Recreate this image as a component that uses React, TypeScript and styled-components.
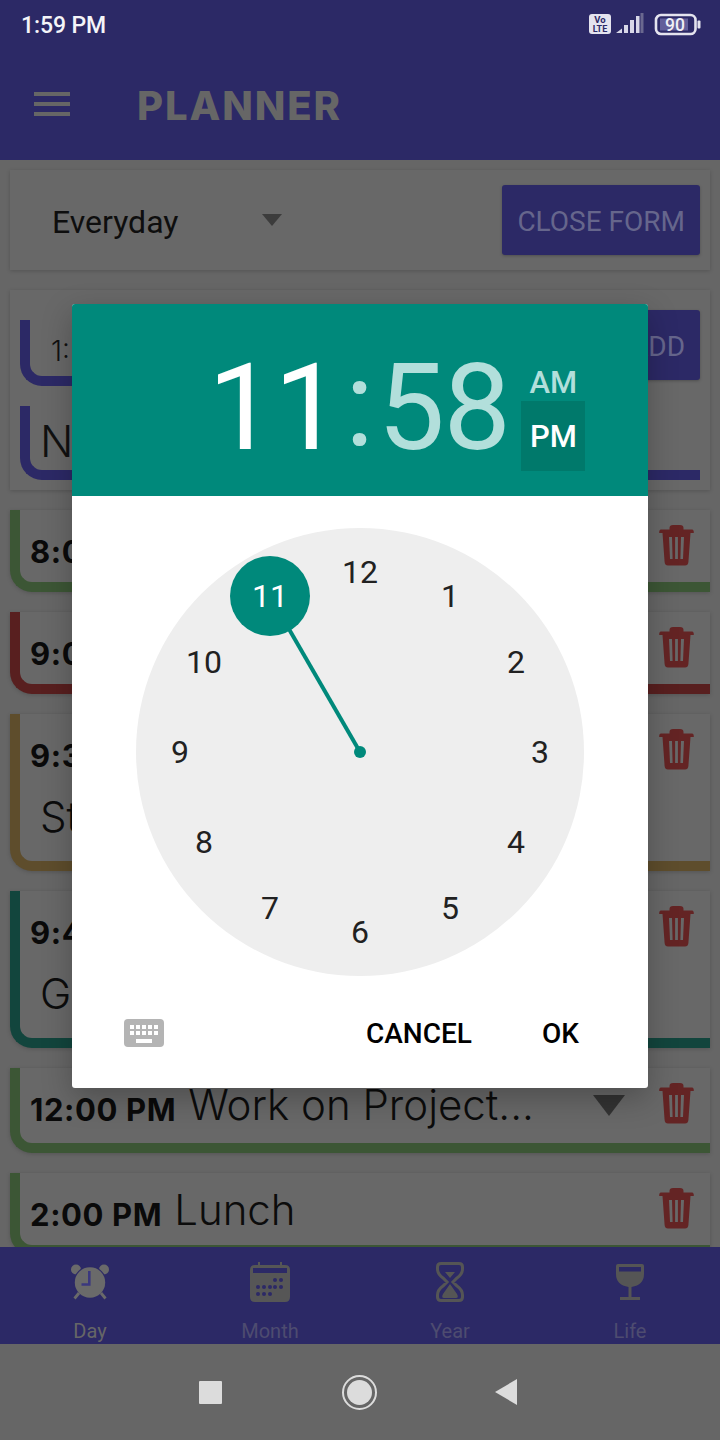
import React from "react";
import styled, { createGlobalStyle } from "styled-components";

const Global = createGlobalStyle`
  html, body { margin: 0; padding: 0; background: #666; }
  * { box-sizing: border-box; }
  body { font-family: Roboto, "Liberation Sans", sans-serif; }
`;

const Page = styled.div`
  position: relative;
  width: 720px;
  height: 1440px;
  display: flex;
  flex-direction: column;
  overflow: hidden;
  background: #666;
`;
const TopBlock = styled.header`
  height: 160px;
  flex: none;
  background: #2c2966;
  display: flex;
  flex-direction: column;
`;
const StatusBar = styled.div`
  height: 50px;
  padding: 0 19px 0 21px;
  display: flex;
  align-items: center;
  justify-content: space-between;
  color: #f4f4f8;
`;
const Clock = styled.span`
  font-size: 23px;
  font-weight: 500;
  line-height: 50px;
  padding-top: 2px;
  letter-spacing: -0.1px;
`;
const StatusIcons = styled.div`
  display: flex;
  align-items: center;
  margin-top: -2px;
`;
const AppBar = styled.div`
  flex: 1;
  display: flex;
  align-items: center;
  padding: 0 0 0 34px;
  margin-top: -2px;
`;
const Burger = styled.div`
  width: 36px;
  height: 24px;
  display: flex;
  flex-direction: column;
  justify-content: space-between;
  margin-right: 67px;
  span { display: block; height: 4px; background: #666; }
`;
const AppTitle = styled.h1`
  margin: 2px 0 0;
  font-family: Inter, sans-serif;
  font-size: 40px;
  font-weight: 800;
  letter-spacing: 1.9px;
  color: #666;
`;
const Content = styled.main`
  flex: 1;
  min-height: 0;
  overflow: hidden;
  padding: 10px 10px 0;
  display: flex;
  flex-direction: column;
  gap: 20px;
`;
const Card = styled.section`
  flex: none;
  background: #686868;
  box-shadow: 0 1px 4px rgba(0, 0, 0, 0.18);
`;
const FilterCard = styled(Card)`
  height: 100px;
  display: flex;
  align-items: center;
  justify-content: space-between;
  padding: 0 10px 0 42px;
`;
const Select = styled.div`
  display: flex;
  align-items: center;
  gap: 84px;
`;
const SelectText = styled.span`
  font-size: 32px;
  line-height: 44px;
  padding-top: 4px;
  color: #0e0e0e;
`;
const Caret = styled.span<{ $w: number; $h: number; $c: string }>`
  display: block;
  width: 0;
  height: 0;
  border-left: ${(p) => p.$w / 2}px solid transparent;
  border-right: ${(p) => p.$w / 2}px solid transparent;
  border-top: ${(p) => p.$h}px solid ${(p) => p.$c};
  flex: none;
`;
const Button = styled.button`
  height: 70px;
  border: 0;
  border-radius: 3px;
  background: #2c2966;
  color: #66668c;
  font-family: Roboto, sans-serif;
  font-size: 28px;
  padding: 2px 15px 0;
  box-shadow: 0 1px 3px rgba(0, 0, 0, 0.25);
`;
const FormCard = styled(Card)`
  height: 200px;
  padding: 20px 10px 10px;
  display: flex;
  flex-direction: column;
  gap: 20px;
`;
const FormTop = styled.div`
  display: flex;
  gap: 10px;
  height: 76px;
`;
const Input = styled.div<{ $c: string; $size: number; $pad: number }>`
  flex: 1;
  margin-top: 10px;
  border-left: 10px solid ${(p) => p.$c};
  border-bottom: 10px solid ${(p) => p.$c};
  border-bottom-left-radius: 22px;
  padding: 6px 0 0 ${(p) => p.$pad}px;
  display: flex;
  align-items: center;
  font-family: Inter, sans-serif;
  font-weight: 300;
  font-size: ${(p) => p.$size}px;
  color: #111;
`;
const NameInput = styled(Input)`
  margin-top: 0;
  height: 74px;
  flex: none;
`;
const Row = styled.article<{ $c: string; $h: number }>`
  flex: none;
  height: ${(p) => p.$h}px;
  background: #686868;
  border-left: 10px solid ${(p) => p.$c};
  border-bottom: 10px solid ${(p) => p.$c};
  border-bottom-left-radius: 22px;
  box-shadow: 0 1px 4px rgba(0, 0, 0, 0.18);
  display: flex;
  align-items: flex-start;
  padding: 0 16px 0 10px;
`;
const RowMain = styled.div<{ $stack?: boolean }>`
  flex: 1;
  min-width: 0;
  display: flex;
  flex-direction: ${(p) => (p.$stack ? "column" : "row")};
  align-items: flex-start;
  gap: ${(p) => (p.$stack ? "14px" : "12px")};
`;
const Time = styled.span`
  margin-top: 20px;
  font-family: Inter, sans-serif;
  font-weight: 700;
  font-size: 31px;
  line-height: 44px;
  color: #0a0a0a;
  letter-spacing: 0.6px;
  white-space: nowrap;
`;
const Title = styled.span<{ $stack?: boolean }>`
  margin: ${(p) => (p.$stack ? "0 0 0 10px" : "12px 0 0")};
  font-family: Inter, sans-serif;
  font-weight: 300;
  font-size: 42px;
  line-height: 50px;
  color: #0c0c0c;
  white-space: nowrap;
`;
const RowCaret = styled.div`
  margin: 27px 34px 0 0;
`;
const TrashWrap = styled.div`
  margin-top: 14px;
  flex: none;
  line-height: 0;
`;
const BottomNav = styled.nav`
  flex: none;
  height: 97px;
  background: #2c2966;
  display: grid;
  grid-template-columns: repeat(4, 1fr);
`;
const Tab = styled.div<{ $active?: boolean }>`
  display: flex;
  flex-direction: column;
  align-items: center;
  padding-top: 14px;
  color: ${(p) => (p.$active ? "#666" : "#4e4c70")};
  svg { display: block; }
`;
const TabIcon = styled.div`
  height: 42px;
  display: flex;
  align-items: center;
  justify-content: center;
`;
const TabLabel = styled.span`
  margin-top: 15px;
  font-size: 20px;
  line-height: 26px;
`;
const SystemNav = styled.div`
  flex: none;
  height: 96px;
  background: #666;
  display: flex;
  align-items: center;
  justify-content: center;
  padding-right: 2px;
`;
const SysSquare = styled.div`
  width: 23px;
  height: 23px;
  border-radius: 1px;
  background: #dcdcdc;
  margin-right: 120px;
`;
const SysCircle = styled.div`
  width: 35px;
  height: 35px;
  border-radius: 50%;
  border: 2.5px solid #dcdcdc;
  padding: 3px;
  margin-right: 118px;
  &::after { content: ""; display: block; width: 100%; height: 100%; border-radius: 50%; background: #dcdcdc; }
`;
const Dialog = styled.div`
  position: absolute;
  left: 72px;
  top: 304px;
  width: 576px;
  height: 784px;
  background: #fff;
  border-radius: 3px;
  overflow: hidden;
  display: flex;
  flex-direction: column;
  box-shadow: 0 10px 30px rgba(0, 0, 0, 0.25);
`;
const DialogHead = styled.div`
  height: 192px;
  flex: none;
  background: #00897b;
  display: flex;
  align-items: center;
  padding-left: 136px;
`;
const BigTime = styled.div`
  display: flex;
  align-items: center;
  margin-top: 16px;
  font-size: 120px;
  line-height: 160px;
  font-weight: 400;
  letter-spacing: -1.5px;
`;
const Hours = styled.span`
  color: #fff;
`;
const Minutes = styled.span`
  color: #b2dfdb;
`;
const Colon = styled.span`
  color: #b2dfdb;
  margin: -8px 5px 0 5px;
`;
const Meridiem = styled.div`
  display: flex;
  flex-direction: column;
  margin: 35px 0 0 12px;
`;
const MerBtn = styled.div<{ $on?: boolean }>`
  width: 64px;
  height: ${(p) => (p.$on ? 70 : 37)}px;
  display: flex;
  align-items: center;
  justify-content: center;
  font-size: 31px;
  font-weight: 500;
  color: ${(p) => (p.$on ? "#fff" : "#b2dfdb")};
  background: ${(p) => (p.$on ? "#00796b" : "transparent")};
`;
const DialBody = styled.div`
  flex: 1;
  padding: 32px 64px 0;
`;
const Dial = styled.div`
  position: relative;
  width: 448px;
  height: 448px;
  border-radius: 50%;
  background: #eee;
`;
const DialNum = styled.span<{ $on?: boolean }>`
  position: absolute;
  transform: translate(-50%, -50%);
  font-size: 32px;
  line-height: 40px;
  color: ${(p) => (p.$on ? "#fff" : "#212121")};
`;
const Selector = styled.div`
  position: absolute;
  left: 94px;
  top: 28px;
  width: 80px;
  height: 80px;
  border-radius: 50%;
  background: #00897b;
`;
const Hand = styled.div`
  position: absolute;
  left: 222px;
  top: 68px;
  width: 4px;
  height: 156px;
  background: #00897b;
  transform-origin: 50% 100%;
  transform: rotate(-30deg);
`;
const Pivot = styled.div`
  position: absolute;
  left: 218px;
  top: 218px;
  width: 12px;
  height: 12px;
  border-radius: 50%;
  background: #00897b;
`;
const Actions = styled.div`
  flex: none;
  height: 112px;
  display: flex;
  align-items: center;
  padding: 2px 0 0 52px;
  margin-top: auto;
  svg { flex: none; }
`;
const ActionBtn = styled.span<{ $left?: number }>`
  font-size: 28px;
  font-weight: 500;
  color: #000;
  margin-left: ${(p) => p.$left ?? 0}px;
`;

const Trash = () => (
  <svg width="35" height="42" viewBox="0 0 35 42">
    <path fill="#642424" fillRule="evenodd" d="M10.5 4 Q10.5 1 14 1 H21 Q24.5 1 24.5 4 V5.5 H33 Q35 5.5 34.8 9 H31.5 L29.4 38 Q29 41.5 26 41.5 H9 Q6 41.5 5.6 38 L3.5 9 H.2 Q0 5.5 2 5.5 H10.5 Z M10 13 L11 35 H13.6 L13 13 Z M16.1 13 V35 H18.9 V13 Z M22 13 L21.4 35 H24 L25 13 Z" />
  </svg>
);

const Volte = () => (
  <svg width="24" height="22" viewBox="0 0 24 22">
    <rect x="1" y="1" width="22" height="20" rx="3" fill="#e4e3ee" />
    <text x="12" y="9.5" textAnchor="middle" fontFamily="Roboto, sans-serif" fontWeight="700" fontSize="9.5" fill="#2c2966">Vo</text>
    <text x="12" y="18.5" textAnchor="middle" fontFamily="Roboto, sans-serif" fontWeight="700" fontSize="9" fill="#2c2966">LTE</text>
  </svg>
);
const Signal = () => (
  <svg width="28" height="22" viewBox="0 0 28 22" style={{ marginLeft: 4 }}>
    <path fill="#d8d7e8" d="M0 20 L6 15.5 V20 Z" />
    <rect x="8" y="12" width="4" height="8" fill="#d8d7e8" />
    <rect x="14" y="7" width="4" height="13" fill="#d8d7e8" />
    <rect x="20" y="3" width="3.5" height="17" fill="#d8d7e8" />
    <rect x="24.5" y="0" width="3" height="20" fill="#6a688f" />
  </svg>
);
const Battery = () => (
  <svg width="47" height="23" viewBox="0 0 47 23" style={{ marginLeft: 10 }}>
    <rect x="2" y="2" width="39.5" height="19" rx="5" fill="none" stroke="#e4e3ee" strokeWidth="2.6" />
    <rect x="6" y="5.5" width="28" height="12" fill="#625f9a" />
    <rect x="43.5" y="7.5" width="3" height="8" rx="1" fill="#e4e3ee" />
    <text x="21" y="18" textAnchor="middle" fontFamily="Roboto, sans-serif" fontSize="17.5" fontWeight="500" fill="#f0f0f5">90</text>
  </svg>
);
const Keyboard = () => (
  <svg width="40" height="28" viewBox="0 0 40 28">
    <rect width="40" height="28" rx="4" fill="#b4b4b4" />
    {[0, 1, 2, 3, 4].map((i) => (
      <React.Fragment key={i}>
        <rect x={6 + i * 6} y={6} width="4" height="4" fill="#fff" />
        <rect x={6 + i * 6} y={12} width="4" height="4" fill="#fff" />
      </React.Fragment>
    ))}
    <rect x="12" y="20" width="16" height="4" fill="#fff" />
  </svg>
);
const AlarmIcon = () => (
  <svg width="38" height="36" viewBox="0 0 38 36">
    <circle cx="5" cy="5.5" r="5" fill="#6a6a6a" />
    <circle cx="33" cy="5.5" r="5" fill="#6a6a6a" />
    <circle cx="19" cy="18.5" r="16.4" fill="#2c2966" />
    <circle cx="19" cy="18.5" r="15.2" fill="#6a6a6a" />
    <path d="M8 29 L3.5 34.5 M30 29 L34.5 34.5" stroke="#6a6a6a" strokeWidth="2.8" />
    <path d="M18.3 7 V20.5 H10.5" fill="none" stroke="#3b387f" strokeWidth="2.6" />
  </svg>
);
const CalendarIcon = () => (
  <svg width="40" height="40" viewBox="0 0 40 40">
    <path fill="#565656" d="M8 0 H10 V3 H30 V0 H32 V3 H35 Q40 3 40 8 V35 Q40 40 35 40 H5 Q0 40 0 35 V8 Q0 3 5 3 H8 Z" />
    <rect x="3" y="6" width="34" height="5" fill="#2c2966" />
    {[[25, 18], [31, 18], [8, 25], [14, 25], [20, 25], [25, 25], [31, 25], [8, 32], [14, 32], [20, 32]].map(([x, y]) => (
      <circle key={`${x}-${y}`} cx={x} cy={y} r="2" fill="#2c2966" />
    ))}
  </svg>
);
const HourglassIcon = () => (
  <svg width="28" height="40" viewBox="0 0 28 40">
    <path fill="none" stroke="#555" strokeWidth="3" d="M5 1.5 H23 Q26.5 1.5 26.5 5 V7 Q26.5 12 21 16 L17 20 L21 24 Q26.5 28 26.5 33 V35 Q26.5 38.5 23 38.5 H5 Q1.5 38.5 1.5 35 V33 Q1.5 28 7 24 L11 20 L7 16 Q1.5 12 1.5 7 V5 Q1.5 1.5 5 1.5 Z" />
    <path fill="#555" d="M9 10 H19 L14 16 Z M14 22 L21 32 Q23 36 20 36 H8 Q5 36 7 32 Z" />
  </svg>
);
const GlassIcon = () => (
  <svg width="28" height="36" viewBox="0 0 28 36">
    <path fill="#555" fillRule="evenodd" d="M2 0 H26 Q28 0 28 2 V10 Q28 21 15.5 23 V33 H24 V36 H4 V33 H12.5 V23 Q0 21 0 10 V2 Q0 0 2 0 Z M3 3 V7.5 H25 V3 Z" />
  </svg>
);

const dial = [
  ["12", 224, 44], ["1", 314, 68], ["2", 380, 134], ["3", 404, 224], ["4", 380, 314], ["5", 314, 380],
  ["6", 224, 404], ["7", 134, 380], ["8", 68, 314], ["9", 44, 224], ["10", 68, 134], ["11", 134, 68],
] as const;

export default function App() {
  return (
    <Page>
      <Global />
      <TopBlock>
        <StatusBar>
          <Clock>1:59 PM</Clock>
          <StatusIcons><Volte /><Signal /><Battery /></StatusIcons>
        </StatusBar>
        <AppBar>
          <Burger><span /><span /><span /></Burger>
          <AppTitle>PLANNER</AppTitle>
        </AppBar>
      </TopBlock>
      <Content>
        <FilterCard>
          <Select>
            <SelectText>Everyday</SelectText>
            <Caret $w={20} $h={12} $c="#3c3c3c" />
          </Select>
          <Button>CLOSE FORM</Button>
        </FilterCard>
        <FormCard>
          <FormTop>
            <Input $c="#2c2966" $size={28} $pad={21}>1:</Input>
            <Button>ADD</Button>
          </FormTop>
          <NameInput $c="#2c2966" $size={44} $pad={10}>New</NameInput>
        </FormCard>
        <Row $c="#3c5635" $h={82}>
          <RowMain><Time>8:00 AM</Time></RowMain>
          <TrashWrap><Trash /></TrashWrap>
        </Row>
        <Row $c="#581f1f" $h={82}>
          <RowMain><Time>9:00 AM</Time></RowMain>
          <TrashWrap><Trash /></TrashWrap>
        </Row>
        <Row $c="#5e4d2c" $h={157}>
          <RowMain $stack><Time>9:30 AM</Time><Title $stack>Study</Title></RowMain>
          <TrashWrap><Trash /></TrashWrap>
        </Row>
        <Row $c="#12453d" $h={157}>
          <RowMain $stack><Time>9:45 AM</Time><Title $stack>Gym</Title></RowMain>
          <TrashWrap><Trash /></TrashWrap>
        </Row>
        <Row $c="#3c5635" $h={85}>
          <RowMain><Time>12:00 PM</Time><Title>Work on Project...</Title></RowMain>
          <RowCaret><Caret $w={32} $h={21} $c="#333" /></RowCaret>
          <TrashWrap><Trash /></TrashWrap>
        </Row>
        <Row $c="#3c5635" $h={82}>
          <RowMain><Time>2:00 PM</Time><Title>Lunch</Title></RowMain>
          <TrashWrap><Trash /></TrashWrap>
        </Row>
      </Content>
      <BottomNav>
        <Tab $active><TabIcon><AlarmIcon /></TabIcon><TabLabel>Day</TabLabel></Tab>
        <Tab><TabIcon><CalendarIcon /></TabIcon><TabLabel>Month</TabLabel></Tab>
        <Tab><TabIcon><HourglassIcon /></TabIcon><TabLabel>Year</TabLabel></Tab>
        <Tab><TabIcon><GlassIcon /></TabIcon><TabLabel>Life</TabLabel></Tab>
      </BottomNav>
      <SystemNav>
        <SysSquare />
        <SysCircle />
        <svg width="24" height="36" viewBox="0 0 24 36"><path fill="#dcdcdc" d="M22 5 V31 L0 18 Z" /></svg>
      </SystemNav>
      <Dialog>
        <DialogHead>
          <BigTime>
            <Hours>11</Hours>
            <Colon>:</Colon>
            <Minutes>58</Minutes>
          </BigTime>
          <Meridiem>
            <MerBtn>AM</MerBtn>
            <MerBtn $on>PM</MerBtn>
          </Meridiem>
        </DialogHead>
        <DialBody>
          <Dial>
            <Hand />
            <Selector />
            <Pivot />
            {dial.map(([n, x, y]) => (
              <DialNum key={n} $on={n === "11"} style={{ left: x, top: y }}>{n}</DialNum>
            ))}
          </Dial>
        </DialBody>
        <Actions>
          <Keyboard />
          <ActionBtn $left={202}>CANCEL</ActionBtn>
          <ActionBtn $left={70}>OK</ActionBtn>
        </Actions>
      </Dialog>
    </Page>
  );
}
